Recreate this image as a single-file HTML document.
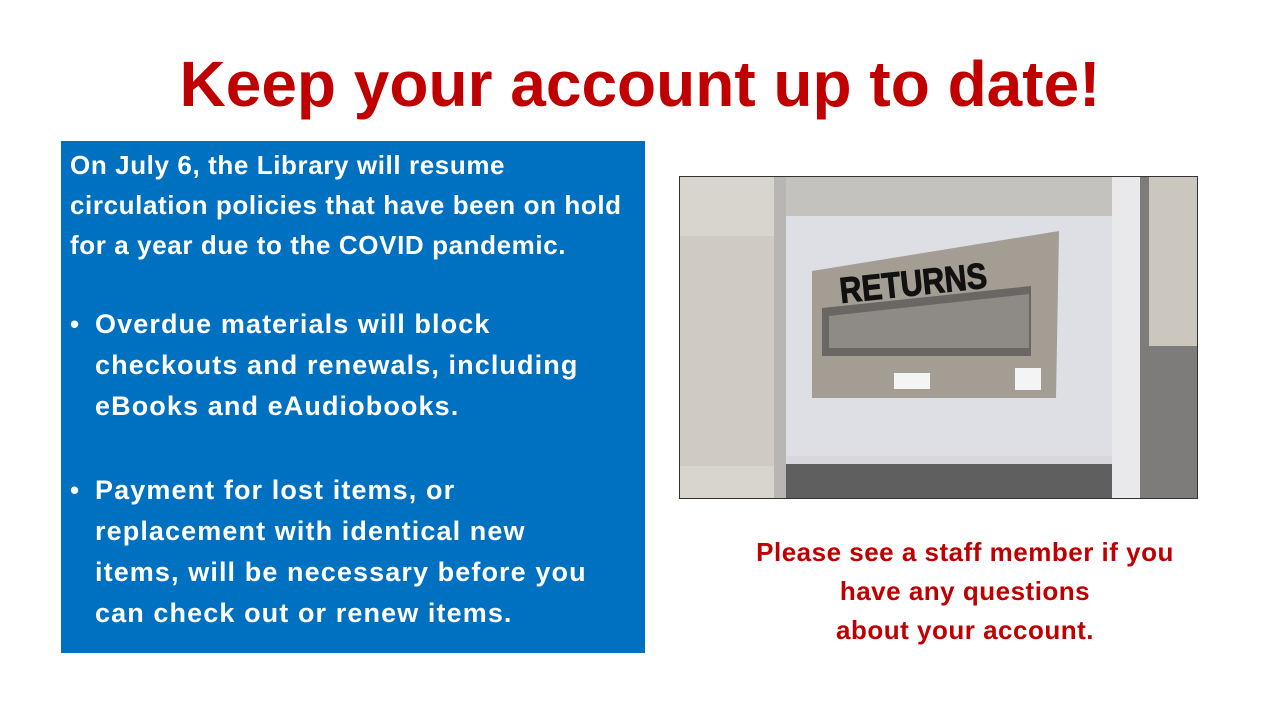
<!DOCTYPE html>
<html><head><meta charset="utf-8"><style>
body{margin:0;width:1280px;height:720px;background:#fff;position:relative;overflow:hidden;font-family:"Liberation Sans",sans-serif}
h1{position:absolute;left:0;width:1280px;top:44px;margin:0;text-align:center;color:#c00000;font-size:64px;font-weight:bold;line-height:80px}
.box{position:absolute;left:61px;top:141px;width:584px;height:512px;background:#0070c0;color:#fff;font-weight:bold;font-size:26px;letter-spacing:0.6px}
.box p{margin:0;position:absolute;left:9px;line-height:40px;white-space:nowrap}
.box p.l{font-size:27px;letter-spacing:1.1px;line-height:41px}
.red{position:absolute;left:700px;width:530px;top:533px;text-align:center;color:#c00000;font-weight:bold;font-size:26px;line-height:39px;letter-spacing:0.5px}
svg{position:absolute;left:679px;top:176px}
</style></head><body>
<h1>Keep your account up to date!</h1>
<div class="box">
<p style="top:4px">On July 6, the Library will resume<br>circulation policies that have been on hold<br>for a year due to the COVID pandemic.</p>
<p style="top:163px;line-height:41px">•</p><p class="l" style="top:163px;left:34px">Overdue materials will block<br>checkouts and renewals, including<br>eBooks and eAudiobooks.</p>
<p style="top:329px;line-height:41px">•</p><p class="l" style="top:329px;left:34px">Payment for lost items, or<br>replacement with identical new<br>items, will be necessary before you<br>can check out or renew items.</p>
</div>
<svg width="519" height="323" viewBox="0 0 519 323">
<rect width="519" height="323" fill="#c9c6c0"/>
<rect x="0" y="0" width="100" height="323" fill="#d8d5cf"/>
<rect x="0" y="60" width="95" height="230" fill="#cfcbc4"/>
<rect x="95" y="0" width="12" height="323" fill="#b8b6b3"/>
<rect x="107" y="0" width="326" height="40" fill="#c4c2bf"/>
<rect x="107" y="40" width="326" height="240" fill="#dedfe4"/>
<rect x="107" y="280" width="326" height="43" fill="#5f5f60"/>
<rect x="107" y="280" width="326" height="8" fill="#d8d8dc"/>
<rect x="433" y="0" width="28" height="323" fill="#e9e9ec"/>
<rect x="461" y="0" width="58" height="323" fill="#7d7c7a"/>
<rect x="470" y="0" width="49" height="170" fill="#cbc7bf"/>
<polygon points="133,95 380,55 377,222 133,222" fill="#a39d93"/>
<polygon points="143,132 352,110 352,180 143,180" fill="#6a6663"/>
<polygon points="150,140 350,118 350,172 150,172" fill="#8e8a86"/>
<g transform="translate(162,127) rotate(-6) scale(0.85,1)"><text x="0" y="0" font-family="Liberation Sans" font-weight="bold" font-size="36" fill="#111" stroke="#111" stroke-width="1">RETURNS</text></g>
<rect x="215" y="197" width="36" height="16" fill="#f4f4f4"/>
<rect x="336" y="192" width="26" height="22" fill="#f4f4f4"/>
<rect x="0.5" y="0.5" width="518" height="322" fill="none" stroke="#333"/>
</svg>
<div class="red">Please see a staff member if you<br>have any questions<br>about your account.</div>
</body></html>
